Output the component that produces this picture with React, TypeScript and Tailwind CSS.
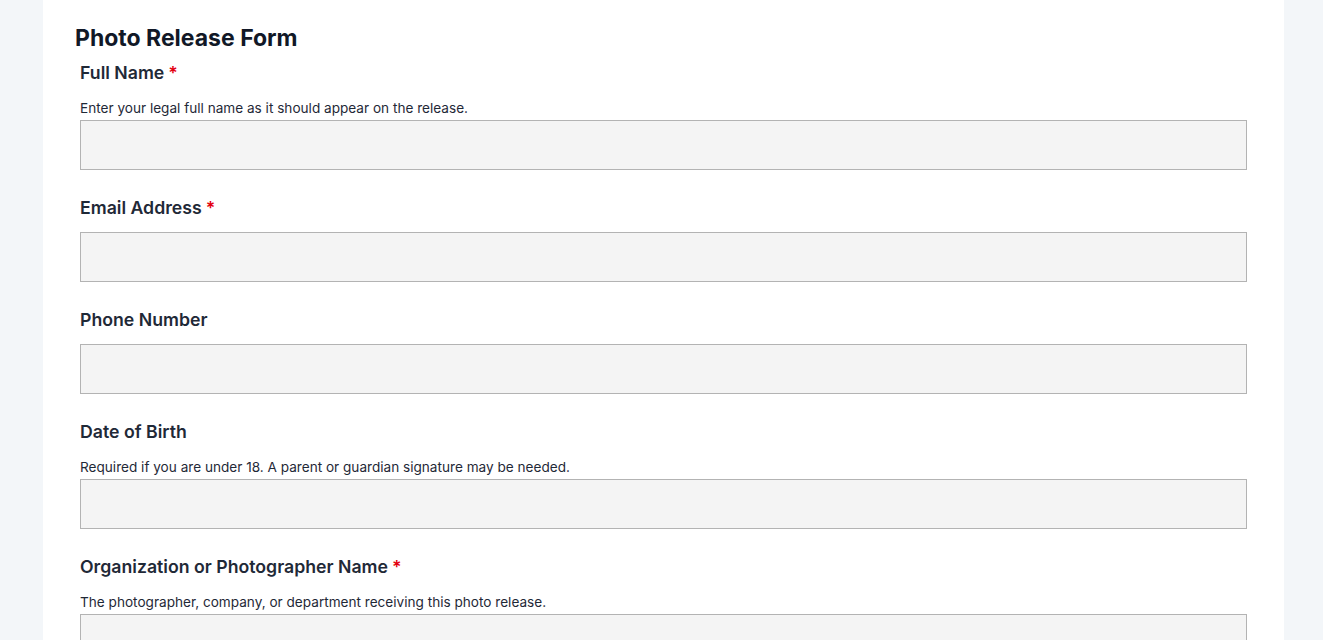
import React from 'react';

interface Field {
  label: string;
  required?: boolean;
  help?: string;
  type?: string;
}

const fields: Field[] = [
  { label: 'Full Name', required: true, help: 'Enter your legal full name as it should appear on the release.' },
  { label: 'Email Address', required: true, type: 'email' },
  { label: 'Phone Number', type: 'tel' },
  { label: 'Date of Birth', help: 'Required if you are under 18. A parent or guardian signature may be needed.' },
  {
    label: 'Organization or Photographer Name',
    required: true,
    help: 'The photographer, company, or department receiving this photo release.',
  },
];

const FormField: React.FC<{ field: Field }> = ({ field }) => (
  <div className="flex flex-col">
    <label className="text-[17.7px] leading-6 font-semibold text-[#1f2937]">
      {field.label}
      {field.required && <span className="ml-1 text-[#e3000f]">*</span>}
    </label>
    {field.help && (
      <p className="mt-[13px] mb-[2px] text-[13.6px] leading-5 text-[#1f2937]">{field.help}</p>
    )}
    <input
      type={field.type || 'text'}
      className={`${field.help ? '' : 'mt-[12px]'} h-[50px] w-full border border-[#b3b3b3] bg-[#f4f4f4] px-3 outline-none`}
    />
  </div>
);

export default function App() {
  return (
    <div className="min-h-[640px] bg-[#f3f6f9] font-['Inter',sans-serif]">
      <div className="ml-[43px] w-[1241px] min-h-[640px] bg-white pt-[22px] pb-10">
        <h1 className="pl-[32px] text-[23px] leading-8 font-bold text-[#111827]">Photo Release Form</h1>
        <form className="mt-[7px] flex flex-col gap-[26px] px-[37px]">
          {fields.map(f => (
            <FormField key={f.label} field={f} />
          ))}
        </form>
      </div>
    </div>
  );
}
